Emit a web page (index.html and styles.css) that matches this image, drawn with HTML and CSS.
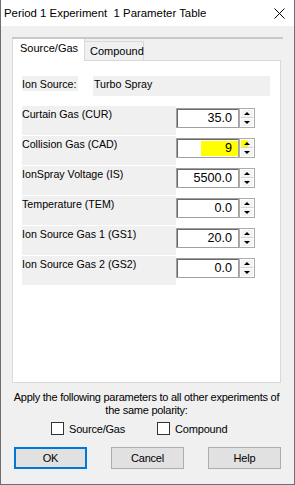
FILE: index.html
```html
<!DOCTYPE html>
<html lang="en">
<head>
    <meta charset="UTF-8">
    <title>Period 1 Experiment 1 Parameter Table</title>
    <link rel="stylesheet" href="styles.css">
</head>
<body>
    <div class="window">
        <div class="titlebar">
            <span class="title">Period 1 Experiment&nbsp; 1 Parameter Table</span>
            <svg class="close" width="11" height="11" viewBox="0 0 11 11">
                <path d="M0.5 0.5 L10.5 10.5 M10.5 0.5 L0.5 10.5" stroke="#000" stroke-width="1" fill="none"/>
            </svg>
        </div>

        <div class="dialog">
            <div class="tabctl">
                <div class="tabs">
                    <div class="tab active">Source/Gas</div>
                    <div class="tab">Compound</div>
                </div>
                <div class="panel">
                    <div class="source-row">
                        <span class="src-label">Ion Source:</span>
                        <span class="src-value">Turbo Spray</span>
                    </div>

                    <div class="params">
                        <div class="param">
                            <div class="param-label">Curtain Gas (CUR)</div>
                            <div class="edit"><span class="value">35.0</span></div>
                            <div class="spin"><span class="up"></span><span class="down"></span></div>
                        </div>
                        <div class="param">
                            <div class="param-label">Collision Gas (CAD)</div>
                            <div class="edit"><span class="value selected">9</span></div>
                            <div class="spin"><span class="up hl"></span><span class="down"></span></div>
                        </div>
                        <div class="param">
                            <div class="param-label">IonSpray Voltage (IS)</div>
                            <div class="edit"><span class="value">5500.0</span></div>
                            <div class="spin"><span class="up"></span><span class="down"></span></div>
                        </div>
                        <div class="param">
                            <div class="param-label">Temperature (TEM)</div>
                            <div class="edit"><span class="value">0.0</span></div>
                            <div class="spin"><span class="up"></span><span class="down"></span></div>
                        </div>
                        <div class="param">
                            <div class="param-label">Ion Source Gas 1 (GS1)</div>
                            <div class="edit"><span class="value">20.0</span></div>
                            <div class="spin"><span class="up"></span><span class="down"></span></div>
                        </div>
                        <div class="param">
                            <div class="param-label">Ion Source Gas 2 (GS2)</div>
                            <div class="edit"><span class="value">0.0</span></div>
                            <div class="spin"><span class="up"></span><span class="down"></span></div>
                        </div>
                    </div>
                </div>
            </div>

            <p class="apply">Apply the following parameters to all other experiments of<br>the same polarity:</p>

            <div class="checks">
                <label class="check"><span class="box"></span>Source/Gas</label>
                <label class="check"><span class="box"></span>Compound</label>
            </div>

            <div class="buttons">
                <button class="button default">OK</button>
                <button class="button">Cancel</button>
                <button class="button">Help</button>
            </div>
        </div>
    </div>
</body>
</html>
```

FILE: styles.css
```css
* {
    box-sizing: border-box;
    margin: 0;
    padding: 0;
}

body {
    font-family: 'Liberation Sans', Arial, sans-serif;
    background: #f0f0f0;
    color: #000;
    width: 295px;
    height: 485px;
    overflow: hidden;
}

.window {
    width: 295px;
    height: 485px;
    border-left: 1px solid #6f6f6f;
    border-right: 1px solid #6f6f6f;
    border-bottom: 1px solid #6f6f6f;
    background: #f0f0f0;
}

/* title bar */
.titlebar {
    height: 26px;
    background: #fff;
    display: flex;
    align-items: center;
    justify-content: space-between;
    padding: 0 9px 1px 3px;
}

.title {
    font-size: 11.4px;
}

.close {
    display: block;
    margin-top: 1px;
}

.dialog {
    padding: 11px 10px 0 11px;
}

/* tab control */
.tabctl {
    width: 271px;
}

.tabs {
    display: flex;
    align-items: flex-end;
    height: 23px;
    border-top: 2px solid #c9c9c9;
    font-size: 11px;
}

.tab {
    height: 19px;
    width: 59px;
    border-top: 1px solid #d9d9d9;
    border-right: 1px solid #d9d9d9;
    padding: 3px 0 0 5px;
    background: #f0f0f0;
}

.tab.active {
    position: relative;
    z-index: 1;
    width: 73px;
    height: 22px;
    margin-bottom: -1px;
    border-top: none;
    border-left: 1px solid #d9d9d9;
    background: #fff;
    padding: 3px 0 0 7px;
}

.panel {
    width: 269px;
    height: 323px;
    background: #fff;
    border: 1px solid #d9d9d9;
    padding: 15px 0 0 9px;
    font-size: 10.67px;
}

.source-row {
    display: flex;
    height: 20px;
}

.src-label {
    width: 56px;
    height: 15px;
    background: #f0f0f0;
    padding-top: 2px;
}

.src-value {
    width: 177px;
    height: 20px;
    margin-left: 15px;
    background: #f0f0f0;
    padding: 2px 0 0 1px;
}

.params {
    margin-top: 10px;
}

.param {
    display: flex;
    height: 29px;
    margin-bottom: 1px;
}

.param-label {
    width: 154px;
    background: #f0f0f0;
    padding-top: 2px;
}

.edit {
    width: 63px;
    height: 20px;
    margin-top: 2px;
    border: 1px solid #a0a0a0;
    box-shadow: inset 1px 1px 0 #696969;
    background: #fff;
    display: flex;
    justify-content: flex-end;
    align-items: flex-start;
    padding: 1px 0 0 0;
    font-size: 12.6px;
}

.value {
    display: inline-block;
    height: 16px;
    line-height: 17px;
    padding-right: 6px;
}

.value.selected {
    width: 37px;
    height: 15px;
    margin-top: 1px;
    line-height: 15px;
    text-align: right;
    background: #ffff00;
}

.spin {
    width: 16px;
    height: 20px;
    margin-top: 2px;
    border: 1px solid #acacac;
    display: flex;
    flex-direction: column;
    background: #fff;
}

.spin span {
    flex: 1;
    display: flex;
    align-items: center;
    justify-content: center;
    background: #f4f4f4;
    border: 1px solid #fff;
}

.spin .up {
    border-bottom: 1px solid #d4d4d4;
}

.spin .hl {
    background: linear-gradient(to right, #ffff00 60%, #f4f4f4 60%);
}

.spin .up::after,
.spin .down::after {
    content: '';
    border-left: 3px solid transparent;
    border-right: 3px solid transparent;
}

.spin .up::after {
    border-bottom: 3px solid #000;
}

.spin .down::after {
    border-top: 3px solid #000;
}

/* bottom area */
.apply {
    margin-top: 8px;
    margin-left: -7px;
    width: 283px;
    text-align: center;
    font-size: 11px;
    line-height: 13px;
    letter-spacing: -0.25px;
}

.checks {
    display: flex;
    gap: 32px;
    margin-top: 5px;
    padding-left: 39px;
    font-size: 11px;
    letter-spacing: -0.2px;
}

.check {
    display: flex;
    align-items: center;
    height: 13px;
}

.box {
    width: 13px;
    height: 13px;
    border: 1px solid #333;
    background: #fff;
    margin-right: 5px;
}

.buttons {
    display: flex;
    gap: 24px;
    margin-top: 12px;
    padding-left: 2px;
}

.button {
    width: 73px;
    height: 22px;
    background: #e1e1e1;
    border: 1px solid #adadad;
    font-family: 'Liberation Sans', Arial, sans-serif;
    font-size: 11px;
    letter-spacing: -0.2px;
    color: #000;
}

.button.default {
    border: 2px solid #0078d7;
}
```
